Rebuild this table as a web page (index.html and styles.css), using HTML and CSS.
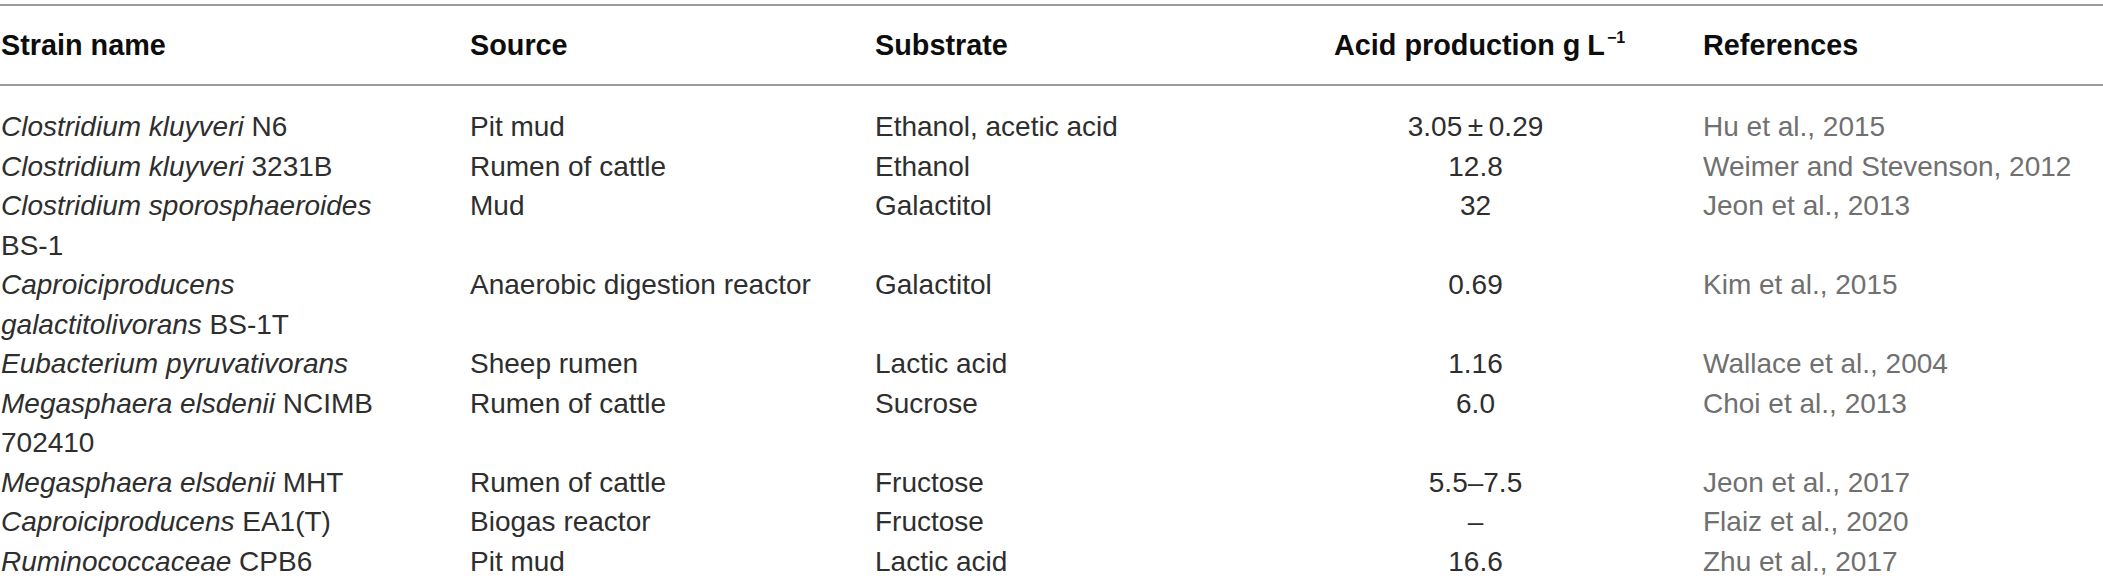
FILE: index.html
```html
<!DOCTYPE html>
<html lang="en">
<head>
<meta charset="utf-8">
<title>Caproic acid producing strains</title>
<link rel="stylesheet" href="styles.css">
</head>
<body>
<table class="data">
  <colgroup>
    <col class="c-strain">
    <col class="c-source">
    <col class="c-substrate">
    <col class="c-acid">
    <col class="c-ref">
  </colgroup>
  <thead>
    <tr>
      <th>Strain name</th>
      <th>Source</th>
      <th>Substrate</th>
      <th>Acid production g<span class="gap"></span>L<sup>−1</sup></th>
      <th>References</th>
    </tr>
  </thead>
  <tbody>
    <tr class="first">
      <td><i>Clostridium kluyveri</i> N6</td>
      <td>Pit mud</td>
      <td>Ethanol, acetic acid</td>
      <td class="num">3.05&#8201;±&#8201;0.29</td>
      <td class="ref">Hu et al., 2015</td>
    </tr>
    <tr>
      <td><i>Clostridium kluyveri</i> 3231B</td>
      <td>Rumen of cattle</td>
      <td>Ethanol</td>
      <td class="num">12.8</td>
      <td class="ref">Weimer and Stevenson, 2012</td>
    </tr>
    <tr>
      <td><i>Clostridium sporosphaeroides</i><br>BS-1</td>
      <td>Mud</td>
      <td>Galactitol</td>
      <td class="num">32</td>
      <td class="ref">Jeon et al., 2013</td>
    </tr>
    <tr>
      <td><i>Caproiciproducens</i><br><i>galactitolivorans</i> BS-1T</td>
      <td>Anaerobic digestion reactor</td>
      <td>Galactitol</td>
      <td class="num">0.69</td>
      <td class="ref">Kim et al., 2015</td>
    </tr>
    <tr>
      <td><i>Eubacterium pyruvativorans</i></td>
      <td>Sheep rumen</td>
      <td>Lactic acid</td>
      <td class="num">1.16</td>
      <td class="ref">Wallace et al., 2004</td>
    </tr>
    <tr>
      <td><i>Megasphaera elsdenii</i> NCIMB<br>702410</td>
      <td>Rumen of cattle</td>
      <td>Sucrose</td>
      <td class="num">6.0</td>
      <td class="ref">Choi et al., 2013</td>
    </tr>
    <tr>
      <td><i>Megasphaera elsdenii</i> MHT</td>
      <td>Rumen of cattle</td>
      <td>Fructose</td>
      <td class="num">5.5–7.5</td>
      <td class="ref">Jeon et al., 2017</td>
    </tr>
    <tr>
      <td><i>Caproiciproducens</i> EA1(T)</td>
      <td>Biogas reactor</td>
      <td>Fructose</td>
      <td class="num">–</td>
      <td class="ref">Flaiz et al., 2020</td>
    </tr>
    <tr>
      <td><i>Ruminococcaceae</i> CPB6</td>
      <td>Pit mud</td>
      <td>Lactic acid</td>
      <td class="num">16.6</td>
      <td class="ref">Zhu et al., 2017</td>
    </tr>
  </tbody>
</table>
</body>
</html>
```

FILE: styles.css
```css
html, body {
  margin: 0;
  padding: 0;
  background: #ffffff;
}

body {
  font-family: "Liberation Sans", Arial, sans-serif;
  font-size: 28px;
  color: #2e2e2e;
}

.data {
  width: 100%;
  border-collapse: collapse;
  table-layout: fixed;
  margin-top: 4px;
}

.c-strain { width: 469px; }
.c-source { width: 405px; }
.c-substrate { width: 459px; }
.c-acid { width: 369px; }
.c-ref { width: auto; }

.data thead tr {
  border-top: 2px solid #9a9a9a;
  border-bottom: 2px solid #9a9a9a;
}

.data th {
  height: 78px;
  padding: 0 0 0 1px;
  text-align: left;
  vertical-align: middle;
  font-size: 28.8px;
  font-weight: bold;
  color: #0d0d0d;
  line-height: 32px;
  white-space: nowrap;
}

.data th .gap {
  display: inline-block;
  width: 7px;
}

.data th sup {
  font-size: 16px;
  font-weight: bold;
  line-height: 0;
  vertical-align: 12px;
  margin-left: 2px;
}

.data td {
  padding: 0 0 0 1px;
  line-height: 39.5px;
  vertical-align: top;
  font-weight: normal;
}

.data tbody tr.first td {
  padding-top: 21px;
}

.data td.num {
  text-align: center;
  padding-right: 85px;
}

.data td.ref {
  color: #707070;
}
```
